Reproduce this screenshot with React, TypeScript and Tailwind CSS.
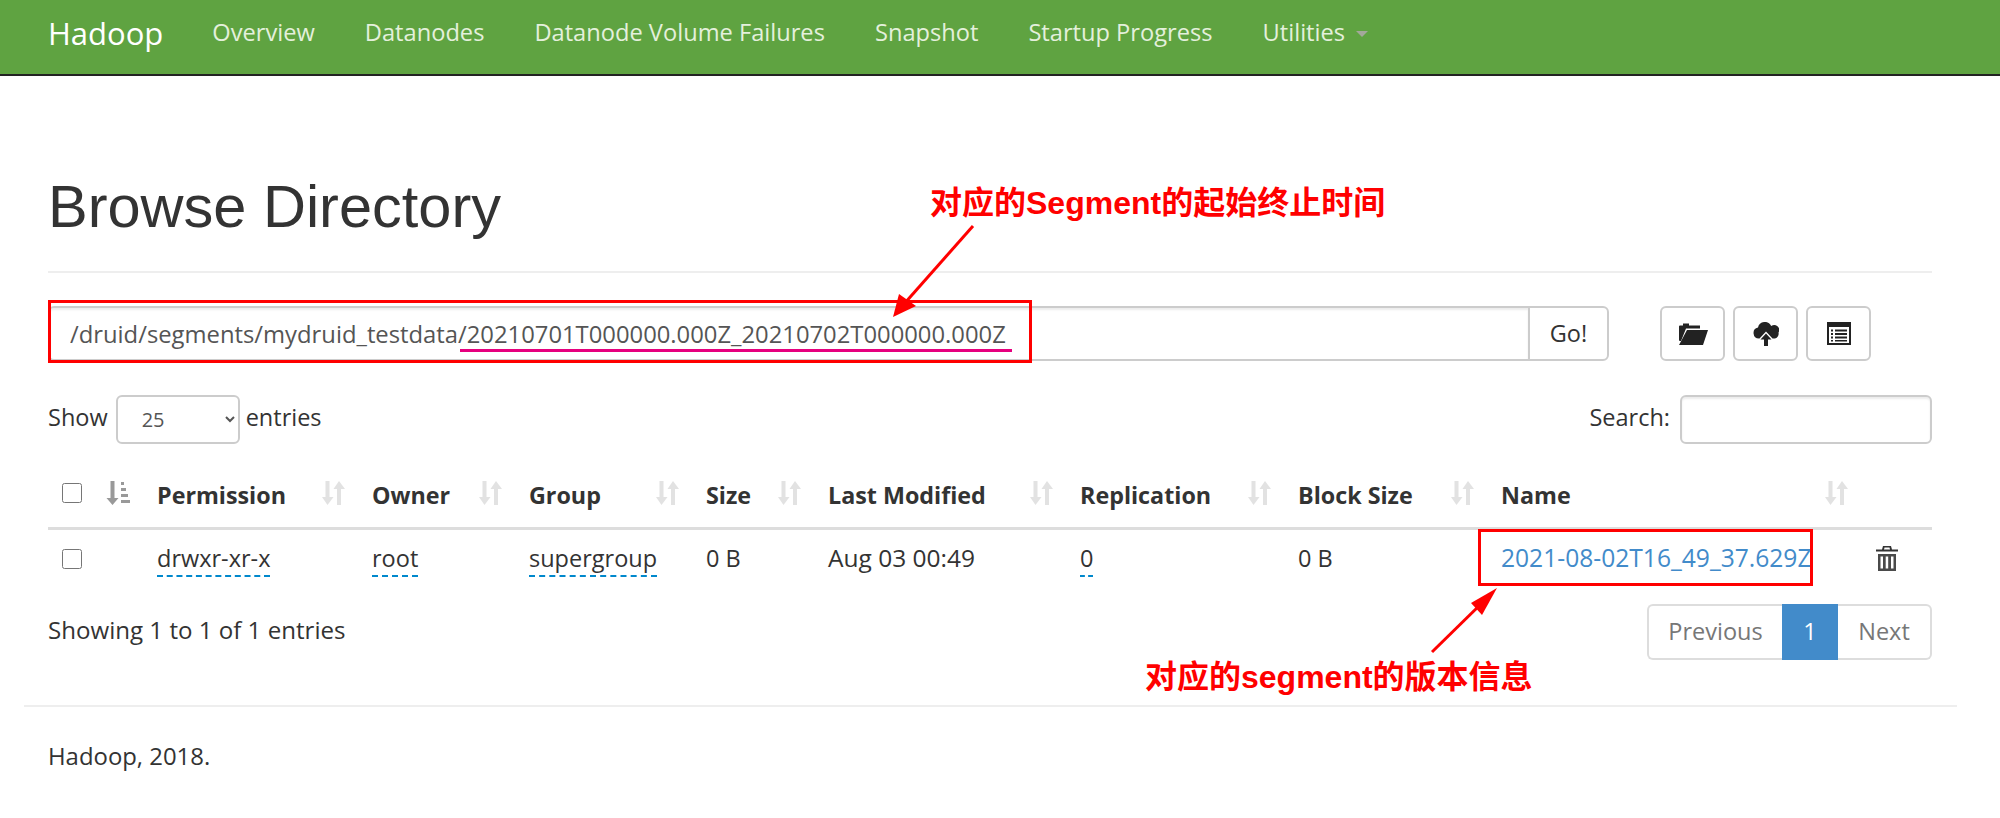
import React from 'react';

const navItems = ['Overview', 'Datanodes', 'Datanode Volume Failures', 'Snapshot', 'Startup Progress'];

function FolderOpenIcon() {
  return (
    <svg width="30" height="22" viewBox="0 0 30 22" fill="#222">
      <path d="M2 2.500h3V0.500h6v2h11v3H8L3 18H2a1 1 0 0 1-1-1V3.500a1 1 0 0 1 1-1z" />
      <path d="M9 7h21l-5 15H1z" />
    </svg>
  );
}

function CloudUploadIcon() {
  return (
    <svg width="26" height="24" viewBox="0 0 26 24" fill="#222">
      <path d="M6 16.500a5.500 5.500 0 0 1-1-10.900A7 7 0 0 1 18.200 4 5 5 0 0 1 25.500 10.500a5 5 0 0 1-3.500 6h-2.500L13 9.500 6.500 16.500z" />
      <path d="M13 11.500l5.500 6H15V24h-4v-6.500H7.500z" />
    </svg>
  );
}

function ListAltIcon() {
  return (
    <svg width="24" height="23" viewBox="0 0 24 23" fill="#222">
      <path fillRule="evenodd" d="M0 0h24v23H0zM2 5v16h20V5z" />
      <path d="M4 7.500h2v2H4zM8 7.500h12v2H8zM4 11h2v2H4zM8 11h12v2H8zM4 14.500h2v2H4zM8 14.500h12v2H8zM4 18h2v1.500H4zM8 18h12v1.500H8z" />
    </svg>
  );
}

function TrashIcon() {
  return (
    <svg width="22" height="25" viewBox="0 0 22 25" fill="#333">
      <path fillRule="evenodd" d="M7 0h8l1 3.500h6V5.500H0V3.500h6zM8.500 1.500L8 3.500h6l-.5-2z" />
      <path fillRule="evenodd" d="M2 8h18v17H2zM4.500 10.500v12h2.500v-12zM9.700 10.500v12h2.500v-12zM15 10.500v12h2.500v-12z" fill="#4a4a4a" />
    </svg>
  );
}

function SortIcon() {
  return (
    <svg width="23" height="24" viewBox="0 0 23 24" fill="#e2e2e2" className="shrink-0">
      <path d="M3.500 0h4v16h4L5.500 24 0 16h3.500z" />
      <path d="M15 8h-3.500L17 0l6 8h-4v16h-4z" />
    </svg>
  );
}

function SortedIcon() {
  return (
    <svg width="24" height="24" viewBox="0 0 24 24" fill="#999" className="shrink-0">
      <path d="M4.500 0h4v17h4L6.500 24 .5 17h4z" />
      <path d="M15 1h3v3h-3zM15 7h5v3h-5zM15 13h7v3h-7zM15 19h9v3h-9z" />
    </svg>
  );
}

function Th({ label }: { label: string }) {
  return (
    <th className="pl-[13px] pr-[14px] text-left font-bold align-middle">
      <div className="flex items-center justify-between">
        <span>{label}</span>
        <span className="-mt-[4px]">
          <SortIcon />
        </span>
      </div>
    </th>
  );
}

function Dashed({ children }: { children: React.ReactNode }) {
  return <span className="border-b-2 border-dashed border-[#0088cc] pb-[1px]">{children}</span>;
}

export default function App() {
  return (
    <div className="relative w-[2000px] h-[818px] overflow-hidden bg-white text-[#333] text-[23.500px] font-['Open_Sans',sans-serif]">
      <nav className="h-[76px] bg-[#5fa341] border-b-2 border-[#222] flex items-center pl-[48px] pb-[8px] text-[23.650px]">
        <span className="text-[31px] text-white mr-[24px]">Hadoop</span>
        {navItems.map((item) => (
          <span key={item} className="px-[25px] text-[#e4f0dc]">
            {item}
          </span>
        ))}
        <span className="pl-[25px] text-[#e4f0dc] flex items-center">
          Utilities
          <span className="ml-[11px] mt-[3px] border-x-[6px] border-t-[6px] border-x-transparent border-t-[#a3a89a]" />
        </span>
      </nav>

      <main className="pl-[48px] pr-[68px]">
        <h1 className="mt-[93px] text-[59.500px] leading-[76px] font-['Liberation_Sans',sans-serif]">Browse Directory</h1>
        <hr className="mt-[26px] border-t-2 border-[#eee]" />

        <div className="mt-[33px] flex">
          <div className="flex">
            <input
              readOnly
              value="/druid/segments/mydruid_testdata/20210701T000000.000Z_20210702T000000.000Z"
              className="w-[1480px] h-[55px] px-[20px] border-2 border-[#ccc] border-r-0 rounded-l-[6px] text-[#555] text-[23.800px] shadow-[inset_0_2px_2px_rgba(0,0,0,0.075)] outline-none"
            />
            <button className="w-[81px] h-[55px] border-2 border-[#ccc] rounded-r-[6px]">Go!</button>
          </div>
          <div className="ml-[51px] flex gap-[8px]">
            <button className="w-[65px] h-[55px] border-2 border-[#ccc] rounded-[6px] flex items-center justify-center">
              <FolderOpenIcon />
            </button>
            <button className="w-[65px] h-[55px] border-2 border-[#ccc] rounded-[6px] flex items-center justify-center">
              <CloudUploadIcon />
            </button>
            <button className="w-[65px] h-[55px] border-2 border-[#ccc] rounded-[6px] flex items-center justify-center">
              <ListAltIcon />
            </button>
          </div>
        </div>

        <div className="mt-[34px] flex items-center justify-between">
          <div className="flex items-center">
            <span className="-mt-[3px]">Show</span>
            <select className="ml-[8px] mr-[6px] w-[124px] h-[49px] pl-[20px] pr-[6px] border-2 border-[#ccc] rounded-[6px] bg-white text-[#555] text-[20px]">
              <option>25</option>
            </select>
            <span className="-mt-[3px]">entries</span>
          </div>
          <div className="flex items-center gap-[10px]">
            <span className="-mt-[3px]">Search:</span>
            <input className="w-[252px] h-[49px] border-2 border-[#ccc] rounded-[6px] shadow-[inset_0_2px_2px_rgba(0,0,0,0.075)]" />
          </div>
        </div>

        <table className="mt-[20px] w-[1884px] table-fixed border-collapse">
          <colgroup>
            <col className="w-[96px]" />
            <col className="w-[215px]" />
            <col className="w-[157px]" />
            <col className="w-[177px]" />
            <col className="w-[122px]" />
            <col className="w-[252px]" />
            <col className="w-[218px]" />
            <col className="w-[203px]" />
            <col className="w-[374px]" />
            <col className="w-[70px]" />
          </colgroup>
          <thead>
            <tr className="h-[64px] border-b-[3px] border-[#ddd] text-[23.300px]">
              <th className="pl-[14px] pr-[14px]">
                <div className="flex items-center justify-between">
                  <input type="checkbox" className="w-[20px] h-[20px] -mt-[4px]" />
                  <span className="-mt-[4px]">
                    <SortedIcon />
                  </span>
                </div>
              </th>
              <Th label="Permission" />
              <Th label="Owner" />
              <Th label="Group" />
              <Th label="Size" />
              <Th label="Last Modified" />
              <Th label="Replication" />
              <Th label="Block Size" />
              <Th label="Name" />
              <th />
            </tr>
          </thead>
          <tbody>
            <tr className="h-[62px]">
              <td className="pl-[14px] pb-[2px]">
                <input type="checkbox" className="w-[20px] h-[20px] block" />
              </td>
              <td className="pl-[13px] pb-[2px]">
                <Dashed>drwxr-xr-x</Dashed>
              </td>
              <td className="pl-[13px] pb-[2px]">
                <Dashed>root</Dashed>
              </td>
              <td className="pl-[13px] pb-[2px]">
                <Dashed>supergroup</Dashed>
              </td>
              <td className="pl-[13px] pb-[2px]">0 B</td>
              <td className="pl-[13px] pb-[2px] text-[24.500px]">Aug 03 00:49</td>
              <td className="pl-[13px] pb-[2px]">
                <Dashed>0</Dashed>
              </td>
              <td className="pl-[13px] pb-[2px]">0 B</td>
              <td className="pl-[13px] pb-[2px] text-[24.600px] text-[#428bca] whitespace-nowrap">2021-08-02T16_49_37.629Z</td>
              <td className="pl-[14px] pb-[2px]">
                <TrashIcon />
              </td>
            </tr>
          </tbody>
        </table>

        <div className="mt-[14px] flex items-center justify-between">
          <span className="-mt-[3px] text-[24.100px]">Showing 1 to 1 of 1 entries</span>
          <div className="flex h-[56px]">
            <span className="w-[135px] flex items-center justify-center border-2 border-r-0 border-[#ddd] rounded-l-[6px] text-[#777]">
              Previous
            </span>
            <span className="w-[56px] flex items-center justify-center bg-[#428bca] text-white">1</span>
            <span className="w-[94px] flex items-center justify-center border-2 border-l-0 border-[#ddd] rounded-r-[6px] text-[#777]">
              Next
            </span>
          </div>
        </div>
      </main>

      <footer className="mx-[24px] w-[1933px] mt-[45px] border-t-2 border-[#eee] pl-[24px] pt-[31px] text-[23.900px]">Hadoop, 2018.</footer>

      {/* red annotations drawn over the screenshot */}
      <div className="absolute left-[48px] top-[300px] w-[984px] h-[63px] border-[3px] border-[#ff0000]" />
      <div className="absolute left-[460px] top-[349px] w-[552px] h-[3px] bg-[#e6007e]" />
      <div className="absolute left-[1478px] top-[529px] w-[335px] h-[57px] border-[3px] border-[#ff0000]" />
      <div className="absolute left-[930px] top-[182px] text-[32px] font-bold text-[#ff0000] leading-[42px] font-['Liberation_Sans','Noto_Sans_CJK_SC',sans-serif]">
        对应的Segment的起始终止时间
      </div>
      <div className="absolute left-[1145px] top-[656px] text-[32px] font-bold text-[#ff0000] leading-[42px] font-['Liberation_Sans','Noto_Sans_CJK_SC',sans-serif]">
        对应的segment的版本信息
      </div>
      <svg className="absolute left-0 top-0 pointer-events-none" width="2000" height="818" viewBox="0 0 2000 818">
        <line x1="973" y1="226" x2="904" y2="304" stroke="#ff0000" strokeWidth="3" />
        <path d="M893 317l6-23 17 12z" fill="#ff0000" />
        <line x1="1432" y1="652" x2="1483" y2="602" stroke="#ff0000" strokeWidth="3" />
        <path d="M1497 588l-26 15 11 12z" fill="#ff0000" />
      </svg>
    </div>
  );
}
